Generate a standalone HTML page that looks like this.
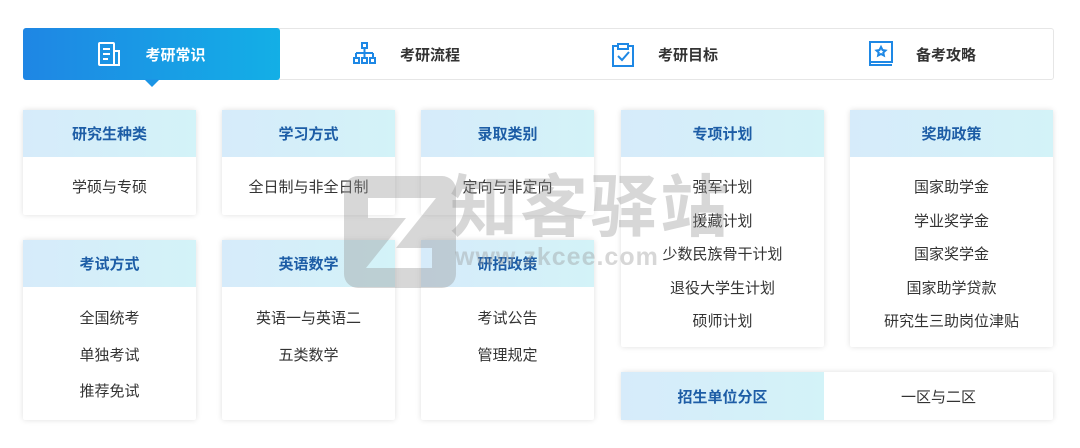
<!DOCTYPE html>
<html><head><meta charset="utf-8"><style>
*{margin:0;padding:0;box-sizing:border-box}
body{width:1080px;height:448px;background:#fff;position:relative;overflow:hidden;font-family:"Liberation Sans","Noto Sans CJK SC",sans-serif}
.bar{position:absolute;left:23px;top:28px;width:1031px;height:52px;border:1px solid #e6e6e6;border-radius:3px;background:#fff}
.tab{position:absolute;top:28px;height:52px;display:flex;align-items:center;font-size:15px;font-weight:bold;color:#333}
.tab svg{margin-right:22px}
.act{left:23px;width:257px;background:linear-gradient(90deg,#1f86e4,#13afe6);border-radius:3px;color:#fff;justify-content:center}
.tri{position:absolute;left:144px;top:79px;width:0;height:0;border-left:8px solid transparent;border-right:8px solid transparent;border-top:8px solid #1b95e5}
.card{position:absolute;background:#fff;box-shadow:0 0 6px rgba(0,0,0,.13);border-radius:2px}
.hd{height:47px;background:linear-gradient(90deg,#d6ebfa,#d3f3f8);color:#1d5da6;font-weight:bold;font-size:15px;display:flex;align-items:center;justify-content:center}
.bd{text-align:center;font-size:15px;color:#333;padding-top:19px}
.bd div{height:33.5px}
.wm{position:absolute;color:rgba(150,150,150,.38);font-weight:bold;pointer-events:none}
</style></head><body>
<div class="bar"></div>
<div class="tab act"><svg width="26" height="26" viewBox="0 0 26 26" fill="none" stroke="#fff" stroke-width="2"><rect x="2" y="2" width="15" height="22" rx="1"/><path d="M17 10h5v14H5M6 8h7M6 13h7M6 18h5"/></svg>考研常识</div>
<div class="tri"></div>
<div class="tab" style="left:352px"><svg width="26" height="26" viewBox="0 0 26 26" fill="none" stroke="#1e88e5" stroke-width="2"><rect x="10" y="2" width="5" height="5"/><path d="M12.5 7v5M4 12h17M4 12v5M12.5 12v5M21 12v5"/><rect x="2" y="17" width="5" height="5"/><rect x="10" y="17" width="5" height="5"/><rect x="18" y="17" width="5" height="5"/></svg>考研流程</div>
<div class="tab" style="left:610px"><svg width="26" height="28" viewBox="0 0 26 28" fill="none" stroke="#1e88e5" stroke-width="2"><path d="M8 6H3v20h20V6h-5M8 4h10v5H8zM8 16l4 4 7-8"/></svg>考研目标</div>
<div class="tab" style="left:868px"><svg width="26" height="28" viewBox="0 0 26 28" fill="none" stroke="#1e88e5" stroke-width="2"><rect x="2" y="2" width="22" height="20"/><path d="M2 22v3h22M13 7l1.5 3 3 .5-2.2 2 .6 3-2.9-1.5-2.9 1.5.6-3-2.2-2 3-.5z"/></svg>备考攻略</div>

<div class="card" style="left:23px;top:110px;width:173px;height:105px"><div class="hd">研究生种类</div><div class="bd"><div>学硕与专硕</div></div></div>
<div class="card" style="left:222px;top:110px;width:173px;height:105px"><div class="hd">学习方式</div><div class="bd"><div>全日制与非全日制</div></div></div>
<div class="card" style="left:421px;top:110px;width:173px;height:105px"><div class="hd">录取类别</div><div class="bd"><div>定向与非定向</div></div></div>
<div class="card" style="left:621px;top:110px;width:203px;height:237px"><div class="hd">专项计划</div><div class="bd"><div>强军计划</div><div>援藏计划</div><div>少数民族骨干计划</div><div>退役大学生计划</div><div>硕师计划</div></div></div>
<div class="card" style="left:850px;top:110px;width:203px;height:237px"><div class="hd">奖助政策</div><div class="bd"><div>国家助学金</div><div>学业奖学金</div><div>国家奖学金</div><div>国家助学贷款</div><div>研究生三助岗位津贴</div></div></div>
<div class="card" style="left:23px;top:240px;width:173px;height:180px"><div class="hd">考试方式</div><div class="bd" style="padding-top:20px"><div style="height:36.5px">全国统考</div><div style="height:36.5px">单独考试</div><div>推荐免试</div></div></div>
<div class="card" style="left:222px;top:240px;width:173px;height:180px"><div class="hd">英语数学</div><div class="bd" style="padding-top:20px"><div style="height:36.5px">英语一与英语二</div><div>五类数学</div></div></div>
<div class="card" style="left:421px;top:240px;width:173px;height:180px"><div class="hd">研招政策</div><div class="bd" style="padding-top:20px"><div style="height:36.5px">考试公告</div><div>管理规定</div></div></div>
<div class="card" style="left:621px;top:372px;width:432px;height:48px;display:flex"><div class="hd" style="width:203px;height:48px">招生单位分区</div><div style="flex:1;display:flex;align-items:center;justify-content:center;font-size:15px;color:#333">一区与二区</div></div>

<svg class="wm" style="left:340px;top:172px" width="120" height="120" viewBox="0 0 120 120"><path d="M18 4h84a14 14 0 0 1 14 14v84a14 14 0 0 1-14 14H18A14 14 0 0 1 4 102V18A14 14 0 0 1 18 4zM28 26v20h38L26 96h66V76H56l40-50z" fill="rgba(150,150,150,.38)" fill-rule="evenodd"/></svg>
<div class="wm" style="left:450px;top:168px;font-size:68px;letter-spacing:2px;line-height:80px">知客驿站</div>
<div class="wm" style="left:455px;top:242px;font-size:25px;line-height:30px;letter-spacing:1px">www.zkcee.com</div>
</body></html>
